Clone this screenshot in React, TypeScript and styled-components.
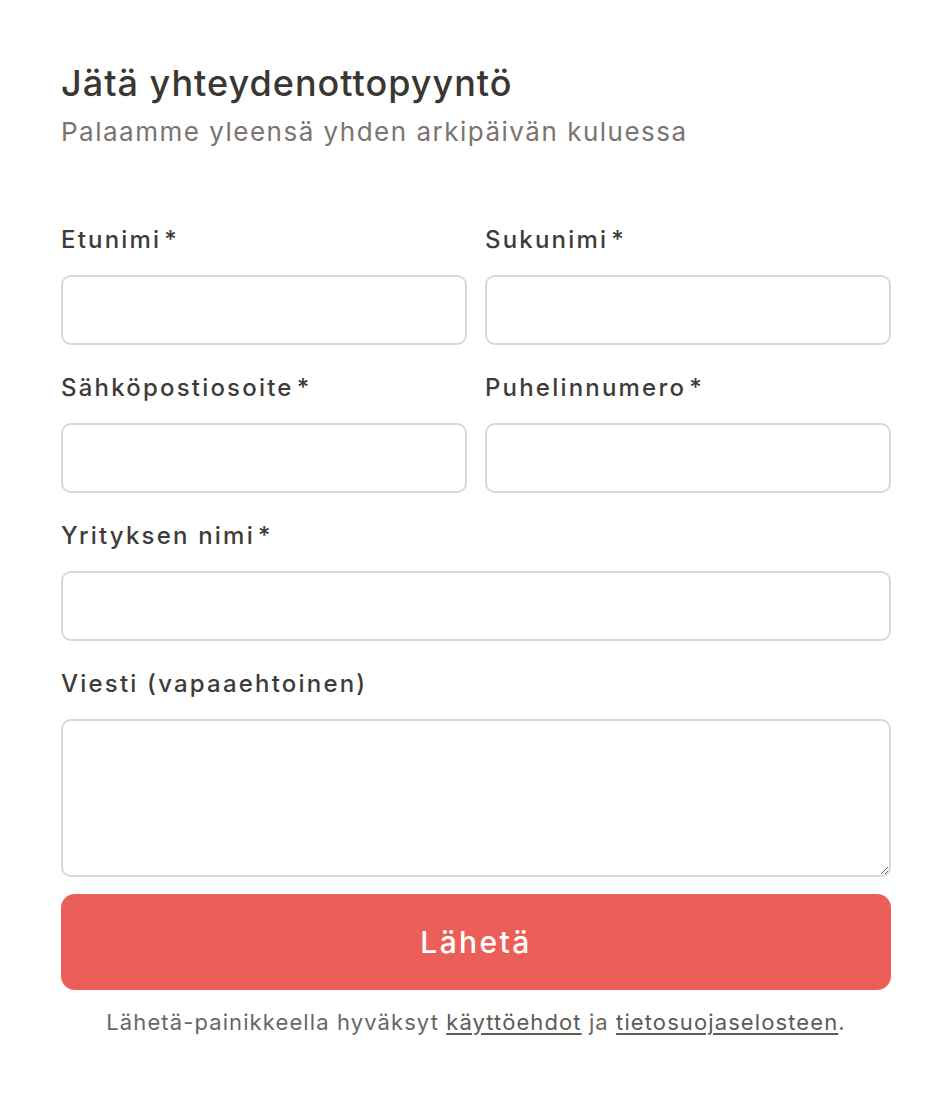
import React from 'react';
import styled, { createGlobalStyle } from 'styled-components';

const GlobalStyle = createGlobalStyle`
  html, body {
    margin: 0;
    padding: 0;
    background: #ffffff;
  }
  body {
    font-family: 'Inter', 'Noto Sans', sans-serif;
  }
  * {
    box-sizing: border-box;
  }
`;

const fields = [
  { id: 'first', label: 'Etunimi', required: true },
  { id: 'last', label: 'Sukunimi', required: true },
  { id: 'email', label: 'Sähköpostiosoite', required: true },
  { id: 'phone', label: 'Puhelinnumero', required: true },
  { id: 'company', label: 'Yrityksen nimi', required: true, wide: true },
];

const App: React.FC = () => {
  return (
    <Page>
      <GlobalStyle />
      <Header>
        <Title>Jätä yhteydenottopyyntö</Title>
        <Subtitle>Palaamme yleensä yhden arkipäivän kuluessa</Subtitle>
      </Header>

      <Form onSubmit={(e) => e.preventDefault()}>
        <Fields>
          {fields.map((f) => (
            <Field key={f.id} $wide={f.wide}>
              <Label htmlFor={f.id}>
                {f.label}
                {f.required && <Star>*</Star>}
              </Label>
              <Input id={f.id} type="text" />
            </Field>
          ))}
          <Field $wide>
            <Label htmlFor="message">Viesti (vapaaehtoinen)</Label>
            <TextArea id="message" />
          </Field>
        </Fields>
        <SubmitButton type="submit">Lähetä</SubmitButton>
        <Note>
          Lähetä-painikkeella hyväksyt <a href="#">käyttöehdot</a> ja{' '}
          <a href="#">tietosuojaselosteen</a>.
        </Note>
      </Form>
    </Page>
  );
};

export default App;

const Page = styled.div`
  width: 952px;
  padding: 61px 61px 40px;
`;

const Header = styled.header`
  display: flex;
  flex-direction: column;
  gap: 10px;
  margin-bottom: 75px;
`;

const Title = styled.h1`
  margin: 0;
  font-size: 36px;
  line-height: 44px;
  font-weight: 500;
  letter-spacing: 1px;
  color: #3a3632;
`;

const Subtitle = styled.p`
  margin: 0;
  font-size: 26px;
  line-height: 34px;
  letter-spacing: 1.5px;
  color: #7b746f;
`;

const Form = styled.form`
  display: flex;
  flex-direction: column;
`;

const Fields = styled.div`
  display: grid;
  grid-template-columns: 1fr 1fr;
  column-gap: 18px;
  row-gap: 27px;
`;

const Field = styled.div<{ $wide?: boolean }>`
  display: flex;
  flex-direction: column;
  gap: 19px;
  grid-column: ${(p) => (p.$wide ? '1 / -1' : 'auto')};
`;

const Label = styled.label`
  font-size: 24px;
  line-height: 32px;
  font-weight: 500;
  letter-spacing: 2.2px;
  color: #3f3b38;
`;

const Star = styled.span`
  margin-left: 3px;
`;

const Input = styled.input`
  height: 70px;
  border: 2px solid #dbd8d5;
  border-radius: 10px;
  padding: 0 18px;
  font: inherit;
  font-size: 20px;
  outline: none;
`;

const TextArea = styled.textarea`
  height: 158px;
  border: 2px solid #dbd8d5;
  border-radius: 10px;
  padding: 14px 18px;
  font: inherit;
  font-size: 20px;
  outline: none;
`;

const SubmitButton = styled.button`
  margin-top: 17px;
  height: 96px;
  border: none;
  border-radius: 14px;
  background: #ec5f59;
  color: #ffffff;
  font-family: inherit;
  font-size: 30px;
  font-weight: 500;
  letter-spacing: 2.4px;
  cursor: pointer;
`;

const Note = styled.p`
  margin: 18px 0 0;
  text-align: center;
  font-size: 22px;
  line-height: 28px;
  letter-spacing: 1.1px;
  color: #6b6662;

  a {
    color: #5e5a56;
    text-decoration: underline;
    text-underline-offset: 3px;
  }
`;
